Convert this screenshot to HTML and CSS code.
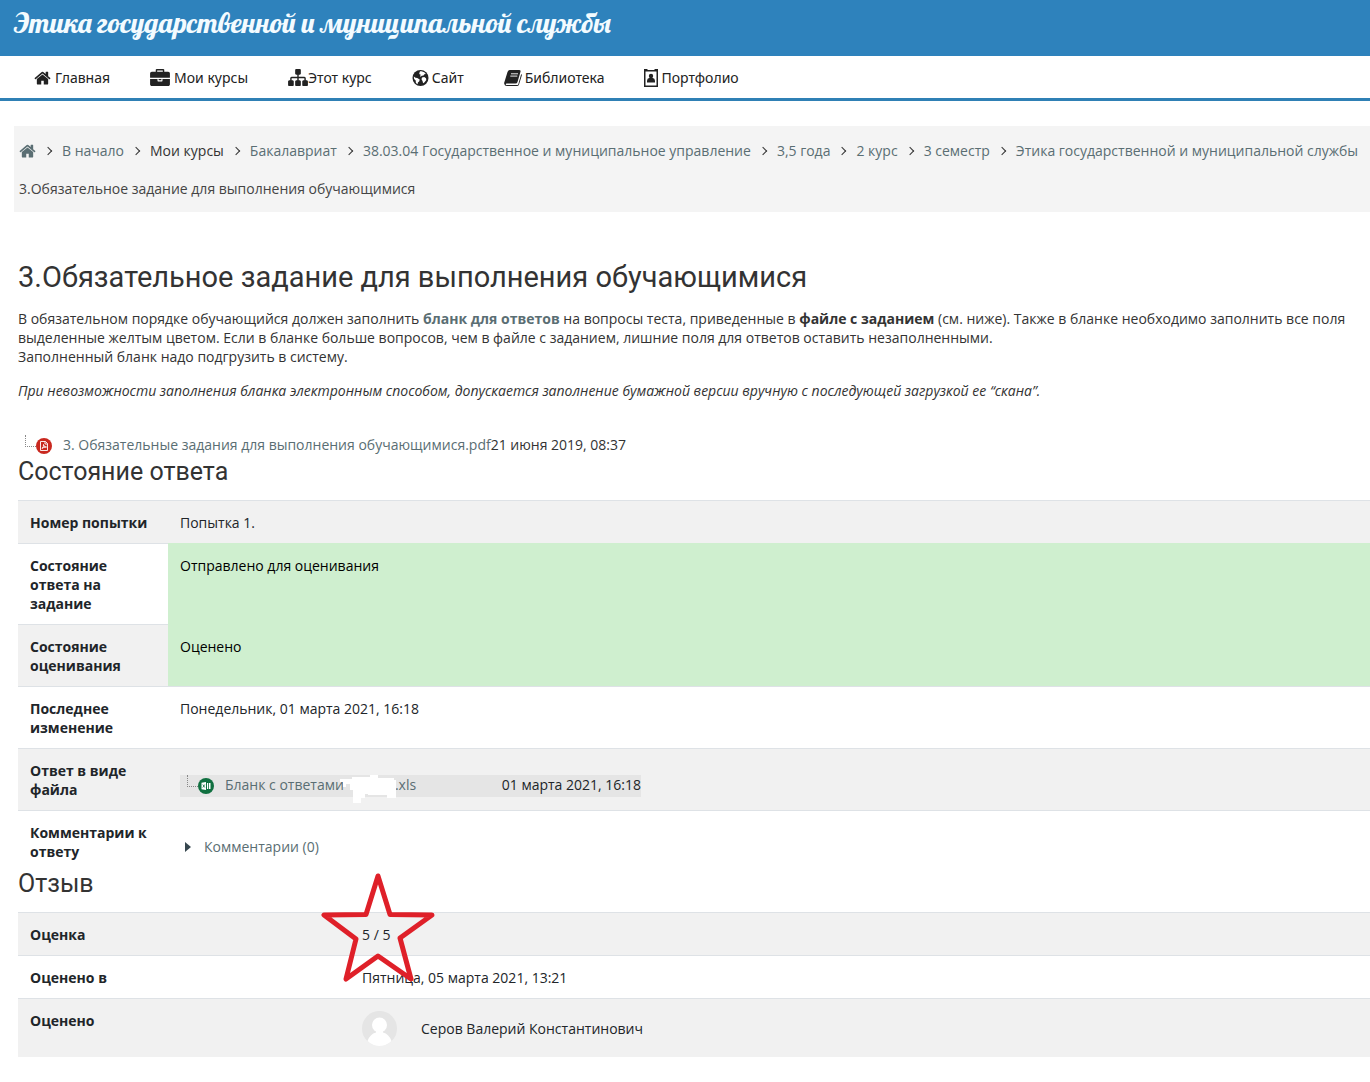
FILE: index.html
```html
<!DOCTYPE html>
<html lang="ru">
<head>
<meta charset="utf-8">
<meta name="viewport" content="width=device-width, initial-scale=1">
<title>Этика государственной и муниципальной службы</title>
<link rel="stylesheet" href="styles.css">
</head>
<body>
<svg class="sprite" aria-hidden="true">
  <symbol id="home" viewBox="0 0 1792 1792"><path d="M1472 992v480q0 26-19 45t-45 19h-384v-384h-256v384h-384q-26 0-45-19t-19-45v-480q0-1 .5-3t.5-3l575-474 575 474q1 2 1 6zm223-69l-62 74q-8 9-21 11h-3q-13 0-21-7l-692-577-692 577q-12 8-24 7-13-2-21-11l-62-74q-8-10-7-23.5t11-21.5l719-599q32-26 76-26t76 26l244 204v-195q0-14 9-23t23-9h192q14 0 23 9t9 23v408l219 182q10 8 11 21.5t-7 23.5z"/></symbol>
</svg>
<header class="banner"><h1 class="course-title">Этика государственной и муниципальной службы</h1></header>
<nav class="menu" aria-label="Основное меню">
  <a class="menu-link" href="#"><svg class="icon" viewBox="32 160 1728 1440"><use href="#home" width="1792" height="1792"/></svg>Главная</a>
  <a class="menu-link" href="#"><svg class="icon icon-wide" viewBox="0 0 1792 1536"><path d="M640 256h512v-128h-512v128zm1152 640v480q0 66-47 113t-113 47h-1472q-66 0-113-47t-47-113v-480h672v160q0 26 19 45t45 19h320q26 0 45-19t19-45v-160h672zm-768 0v128h-256v-128h256zm768-480v384h-1792v-384q0-66 47-113t113-47h352v-160q0-40 28-68t68-28h576q40 0 68 28t28 68v160h352q66 0 113 47t47 113z"/></svg>Мои курсы</a>
  <a class="menu-link menu-link-tight" href="#"><svg class="icon icon-wide" viewBox="0 128 1792 1536"><path d="M1792 1248v320q0 40-28 68t-68 28h-320q-40 0-68-28t-28-68v-320q0-40 28-68t68-28h96v-192h-512v192h96q40 0 68 28t28 68v320q0 40-28 68t-68 28h-320q-40 0-68-28t-28-68v-320q0-40 28-68t68-28h96v-192h-512v192h96q40 0 68 28t28 68v320q0 40-28 68t-68 28h-320q-40 0-68-28t-28-68v-320q0-40 28-68t68-28h96v-192q0-52 38-90t90-38h512v-192h-96q-40 0-68-28t-28-68v-320q0-40 28-68t68-28h320q40 0 68 28t28 68v320q0 40-28 68t-68 28h-96v192h512q52 0 90 38t38 90v192h96q40 0 68 28t28 68z"/></svg>Этот курс</a>
  <a class="menu-link menu-link-near" href="#"><svg class="icon" viewBox="0 0 16 16"><circle cx="8" cy="8" r="8"/><path fill="#fff" d="M7.500 1.300 9 1.200l2.800 1.100 1.600 1.700-1.600.2-.8 1.300-1.800.3-1 1-.7-.8 1-1.200-1.200-.3-.6-1zM1.300 6.500 3 7.800l1.800.3 2.400 1.500-.4 1.600-1.400 1.300-.3 1.700-1.700-1.300-.2-2.300-1.600-1.700zM9.500 7.500l2.300-.4 1.700 1.200.3 1.600-2 2.700-1.200.6-.6-2.200-1-1.700z"/></svg>Сайт</a>
  <a class="menu-link menu-link-near" href="#"><svg class="icon icon-book" viewBox="0 0 18 16"><path d="M6 0h9q2 0 1.500 1.700L13.500 12q-.5 1.500-2 1.500H2.700q-1 0-.9.900.2.700 1.200.700h10q1 0 1.300-.9L17.200 4q.8.600.6 1.400L15 14.500Q14.500 16 13 16H3Q.5 16 .2 13.800q-.1-1.200.4-2.200L3.500 2Q4.100 0 6 0z"/><path fill="none" stroke="#fff" stroke-width=".9" d="M7 3.800h7M6.300 6.100h7"/></svg>Библиотека</a>
  <a class="menu-link menu-link-near" href="#"><svg class="icon icon-badge" viewBox="0 0 14 18"><path fill-rule="evenodd" d="M0 0h3.500v1h7V0H14v18H0zM1.500 2.500v14h11v-14z"/><circle cx="7" cy="7" r="2.200"/><path d="M3 13.500v-1.700Q3.200 9 5.200 9h3.600q2 0 2.200 2.800v1.700z"/></svg>Портфолио</a>
</nav>
<nav class="crumbs" aria-label="Путь">
  <ol class="crumb-list">
    <li><a href="#" aria-label="Главная"><svg class="icon" viewBox="32 160 1728 1440"><use href="#home" width="1792" height="1792"/></svg></a></li>
    <li><a href="#">В начало</a></li>
    <li>Мои курсы</li>
    <li><a href="#">Бакалавриат</a></li>
    <li><a href="#">38.03.04 Государственное и муниципальное управление</a></li>
    <li><a href="#">3,5 года</a></li>
    <li><a href="#">2 курс</a></li>
    <li><a href="#">3 семестр</a></li>
    <li><a href="#">Этика государственной и муниципальной службы</a></li>
  </ol>
  <div class="crumb-current">3.Обязательное задание для выполнения обучающимися</div>
</nav>
<main class="content">
  <h2 class="page-title">3.Обязательное задание для выполнения обучающимися</h2>
  <p class="intro">В обязательном порядке обучающийся должен заполнить <a href="#"><b>бланк для ответов</b></a> на вопросы теста, приведенные в <b>файле с заданием</b> (см. ниже). Также в бланке необходимо заполнить все поля<br>выделенные желтым цветом. Если в бланке больше вопросов, чем в файле с заданием, лишние поля для ответов оставить незаполненными.<br>Заполненный бланк надо подгрузить в систему.</p>
  <p class="intro"><i>При невозможности заполнения бланка электронным способом, допускается заполнение бумажной версии вручную с последующей загрузкой ее “скана”.</i></p>
  <div class="file">
    <span class="branch"></span>
    <svg class="file-icon" viewBox="0 0 16 16"><circle cx="8" cy="8" r="8" fill="#c9281f"/><path fill="none" stroke="#fff" stroke-width=".9" d="M4.500 3.500h5l2 2v7h-7zM9 3.500V6h2.500M6 10.500q2-2 1.500-4 .5 3 3 2.500-3 0-4.500 1.500"/></svg>
    <a class="file-name" href="#">3. Обязательные задания для выполнения обучающимися.pdf</a><span>21 июня 2019, 08:37</span>
  </div>
  <h3 class="section-title">Состояние ответа</h3>
  <table class="summary">
    <tr><th scope="row">Номер попытки</th><td>Попытка 1.</td></tr>
    <tr><th scope="row">Состояние ответа на задание</th><td class="done">Отправлено для оценивания</td></tr>
    <tr><th scope="row">Состояние оценивания</th><td class="done">Оценено</td></tr>
    <tr><th scope="row">Последнее изменение</th><td>Понедельник, 01 марта 2021, 16:18</td></tr>
    <tr><th scope="row">Ответ в виде файла</th><td>
      <div class="file file-answer">
        <span class="branch"></span>
        <svg class="file-icon" viewBox="0 0 16 16"><circle cx="8" cy="8" r="8" fill="#107040"/><path fill="#fff" d="M3.500 4.700 8 4v8l-4.500-.7zM9 5h3.500v6H9z"/><path stroke="#107040" fill="none" stroke-width=".8" d="m4.800 6.500 2 3m0-3-2 3M10.500 5v6"/></svg>
        <a class="file-name" href="#">Бланк с ответами</a>
        <a class="file-ext" href="#">.xls</a>
        <span class="file-date">01 марта 2021, 16:18</span>
        <svg class="eraser" viewBox="0 0 57 29" aria-hidden="true"><path fill="#fff" d="M0 4h12V2h18V0h8v3h16v2h2v18H47v-3H28v-1h-3v4h-4v5h-8V15h-3V9H6v3H3V7H0z"/></svg>
      </div>
    </td></tr>
    <tr><th scope="row">Комментарии к ответу</th><td class="comments"><a class="toggle" href="#"><svg class="caret" viewBox="0 0 6 10"><path d="M0 0l6 5-6 5z"/></svg>Комментарии (0)</a></td></tr>
  </table>
  <h3 class="section-title">Отзыв</h3>
  <table class="summary feedback">
    <tr><th scope="row">Оценка</th><td><span class="grade">5 / 5<svg class="star" viewBox="0 0 114 112" aria-hidden="true"><path d="M57 4 69 42.500 111 43 79 66 90 107 57 84 25 107 35 67 3 43 45 42.500z"/></svg></span></td></tr>
    <tr><th scope="row">Оценено в</th><td>Пятница, 05 марта 2021, 13:21</td></tr>
    <tr><th scope="row">Оценено</th><td><div class="person"><svg class="avatar" viewBox="0 0 35 35"><circle cx="17.500" cy="17.500" r="17.500" fill="#e5e5e5"/><circle cx="17.500" cy="14" r="7.500" fill="#fff"/><path fill="#fff" d="M5.500 30Q8 23 14 21.500V18h7v3.500Q27 23 29.500 30q-5 5-12 5t-12-5z"/></svg>Серов Валерий Константинович</div></td></tr>
  </table>
</main>
</body>
</html>
```
FILE: styles.css
```css
* { box-sizing: border-box; }
body {
  margin: 0;
  overflow-x: hidden;
  background: #fff;
  color: #333;
  font: 14px/19px "Open Sans", "Noto Sans", sans-serif;
}
a { color: #5a6e73; text-decoration: none; }
.sprite { display: none; }
.icon { width: 17px; height: 16px; flex: none; fill: currentColor; }
.icon-wide { width: 20px; height: 17px; }
.icon-book { width: 18px; }
.icon-badge { width: 14px; height: 18px; }

.banner { height: 56px; padding: 5px 14px; background: #2e82bc; }
.course-title {
  margin: 0;
  color: #f3fbff;
  font: normal 28px/36px Lobster, "Liberation Serif", serif;
  white-space: nowrap;
}

.menu {
  display: flex;
  gap: 40px;
  height: 45px;
  padding: 1px 34px 0;
  border-bottom: 3px solid #2f80b5;
  font-family: "Noto Sans", sans-serif;
}
.menu-link { display: flex; align-items: center; gap: 4px; color: #222; white-space: nowrap; }
.menu-link-near { gap: 3px; }
.menu-link-tight { gap: 0; }

.crumbs {
  margin: 25px 0 0 14px;
  padding: 6px 0 4px 5px;
  background: #f4f4f4;
  line-height: 38px;
  white-space: nowrap;
}
.crumb-list { display: flex; margin: 0; padding: 0; list-style: none; }
.crumb-list li { display: flex; align-items: center; }
.crumb-list a { display: flex; }
.crumb-list li + li::before {
  content: "";
  width: 5px;
  height: 5px;
  margin: 0 11px 0 9px;
  border: solid #333;
  border-width: 1px 1px 0 0;
  transform: rotate(45deg);
}
.crumb-current { color: #444; }

.content { padding: 46px 0 24px 18px; }
.page-title, .section-title { margin: 0; font-family: Roboto, sans-serif; font-weight: 400; }
.page-title { margin-bottom: 13px; font-size: 29px; line-height: 38px; }
.section-title { margin-bottom: 13px; font-size: 25px; line-height: 30px; }
.summary + .section-title { margin-top: 8px; }
.intro { margin: 0 0 15px; white-space: nowrap; }

.file { position: relative; display: flex; align-items: flex-start; height: 22px; white-space: nowrap; }
.intro + .file { margin-top: 35px; }
.branch { width: 11px; height: 12px; margin-left: 7px; border: dotted #888; border-width: 0 0 1px 1px; }
.file-icon { width: 16px; height: 16px; margin: 3px 11px 0 0; }

.summary { width: 100%; border-collapse: separate; border-spacing: 0; color: #212529; }
.summary th, .summary td {
  padding: 12px 12px 11px;
  border-top: 1px solid #dee2e6;
  text-align: left;
  vertical-align: top;
}
.summary th { width: 150px; }
.summary tr:nth-child(odd) { background: #f1f1f1; }
.summary .done { border-top-color: #cfefcf; background: #cfefcf; color: #000; }
.file-answer { width: 461px; margin-top: 14px; background: #e5e5e5; }
.file-ext { margin-left: 51px; }
.file-date { margin-left: auto; }
.eraser { position: absolute; left: 160px; top: 0; width: 57px; height: 29px; }
.summary tr:last-child th, .summary tr:last-child .comments { padding-bottom: 0; background: #fff; }
.summary tr:last-child .comments { padding-top: 26px; }
.toggle { display: flex; align-items: center; gap: 13px; padding-left: 5px; }
.caret { width: 6px; height: 10px; fill: #37474f; }

.summary.feedback th { width: 332px; }
.summary.feedback tr:last-child th { background: none; }
.grade { position: relative; }
.star { position: absolute; left: -41px; top: -53px; width: 114px; height: 112px; fill: none; stroke: #df2029; stroke-width: 5; stroke-linejoin: round; }
.person { display: flex; align-items: center; gap: 24px; }
.avatar { width: 35px; height: 35px; }
```
